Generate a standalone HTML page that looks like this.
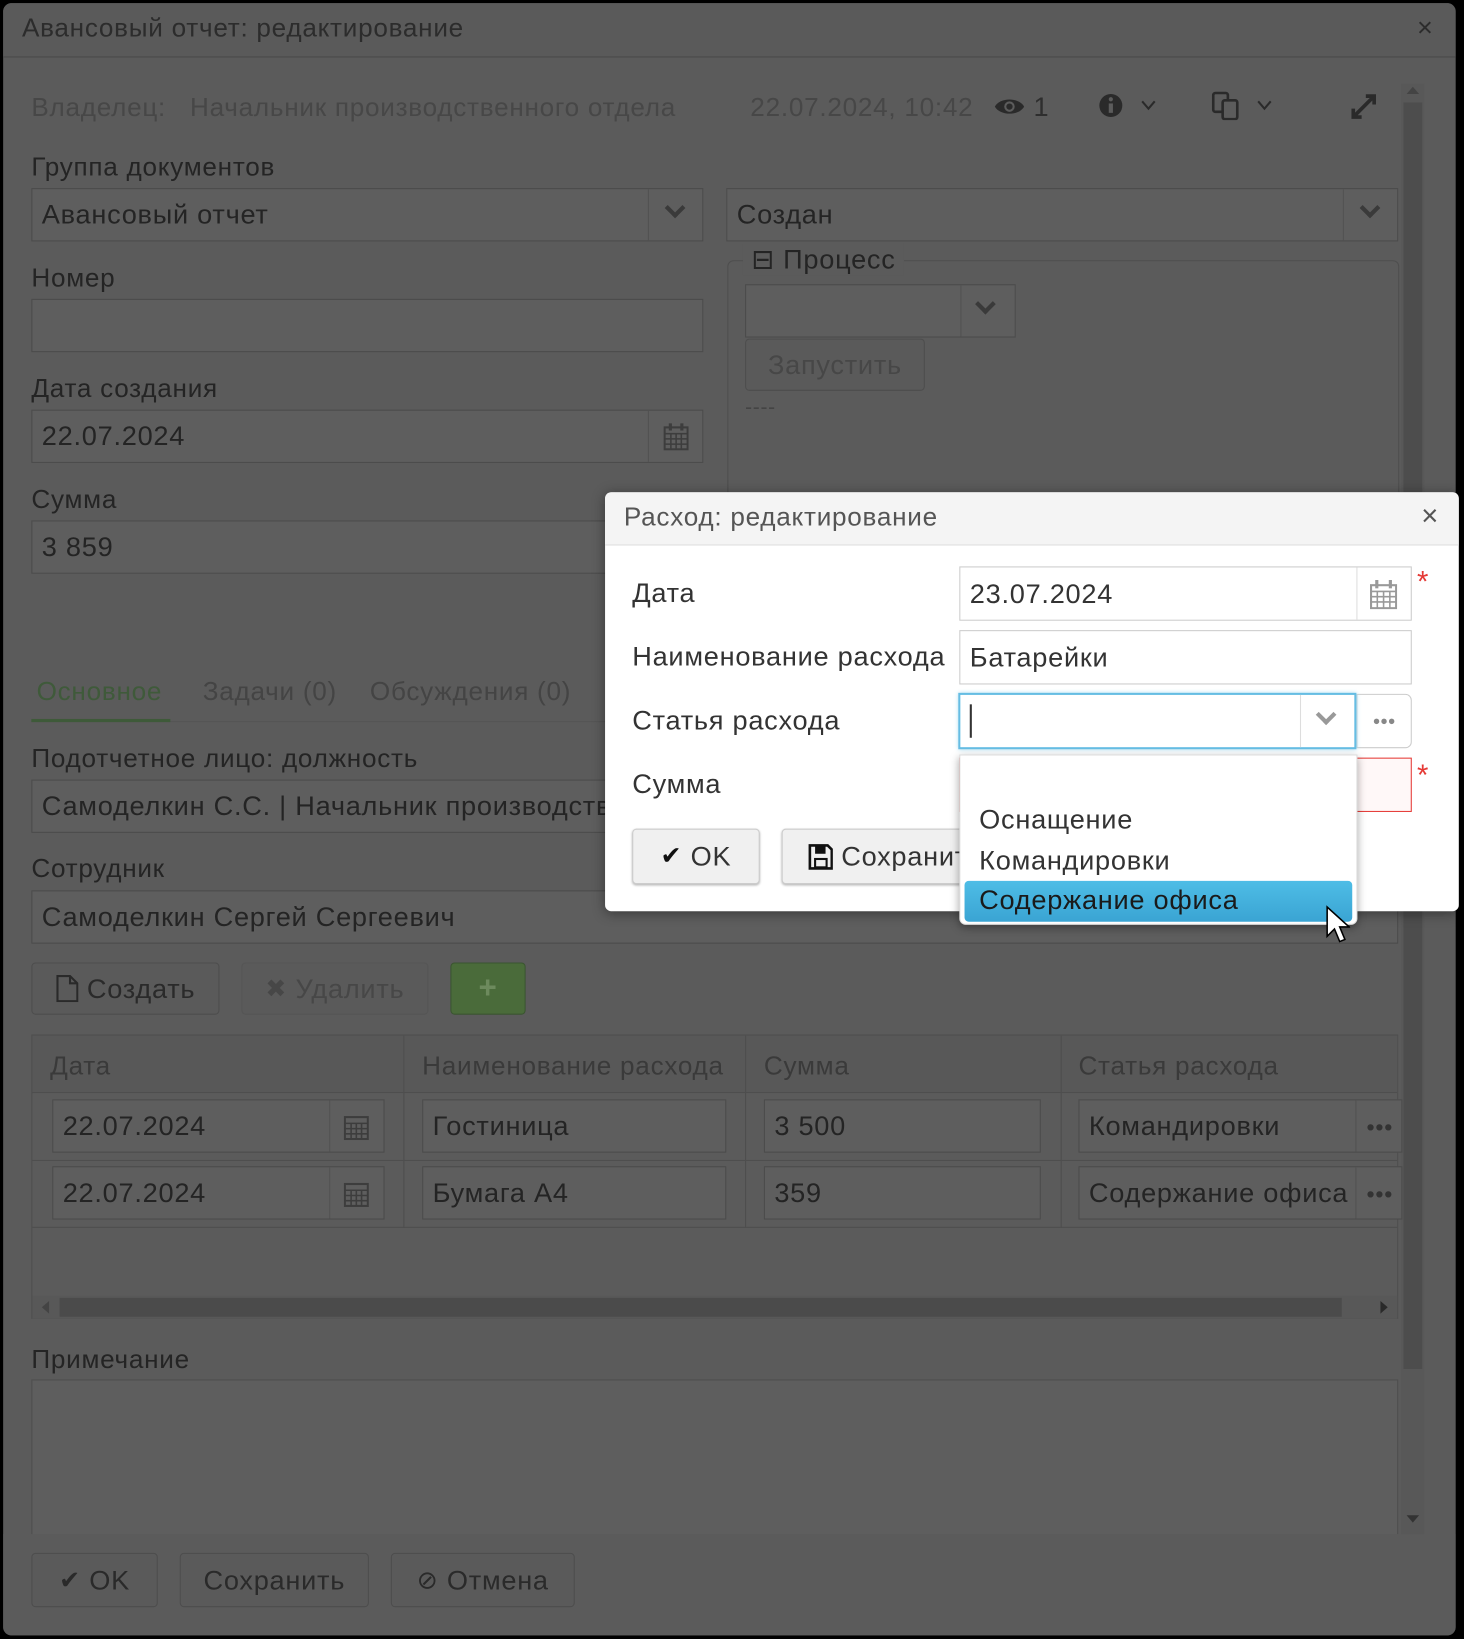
<!DOCTYPE html>
<html><head><meta charset="utf-8"><style>
*{box-sizing:border-box;margin:0;padding:0}
html,body{width:1464px;height:1638px;background:#000;overflow:hidden}
#w{position:absolute;left:0;top:0;width:1401px;height:1568px;transform:scale(1.045);transform-origin:0 0;font-family:"Liberation Sans","DejaVu Sans",sans-serif;letter-spacing:0.7px}
.a{position:absolute;white-space:nowrap}
.p{position:absolute;left:3px;top:3px;width:1390px;height:1562px;background:#5b5b5b;border-radius:8px;overflow:hidden}
.lbl{position:absolute;font-size:25px;color:#242424;white-space:nowrap}
.in{position:absolute;border:1px solid #4b4b4b;background:#5e5e5e;font-size:26px;color:#242424;padding-left:9px;display:flex;align-items:center;white-space:nowrap;overflow:hidden}
.dv{position:absolute;top:0;bottom:0;border-left:1px solid #525252}
.btn{position:absolute;border:1px solid #4d4d4d;border-radius:4px;background:#5a5a5a;font-size:26px;color:#2a2a2a;display:flex;align-items:center;justify-content:center;gap:8px}
.chev{position:absolute;width:14px;height:14px;border-right:4px solid #3a3a3a;border-bottom:4px solid #3a3a3a;transform:rotate(45deg)}
.d{font-size:26px;color:#333}
.din{position:absolute;border:1px solid #ccc;background:#fff;font-size:26px;color:#333;padding-left:9px;display:flex;align-items:center;white-space:nowrap}
.dots{position:absolute;left:264px;top:0;bottom:0;width:46px;display:flex;align-items:center;justify-content:center;font-size:14px;color:#333;font-weight:bold;letter-spacing:0}
</style></head><body><div id="w">
<div class="p">
 <div class="a" style="left:0;top:0;width:1390px;height:52px;background:#5a5a5a;border-bottom:1px solid #4a4a4a"></div>
 <div class="a" style="left:18px;top:10px;font-size:25px;color:#2c2c2c">Авансовый отчет: редактирование</div>
 <div class="a" style="left:1353px;top:8px;font-size:26px;color:#2c2c2c">×</div>
 <div class="a" style="left:1338px;top:77px;width:22px;height:1388px;background:#585858"></div>
 <div class="a" style="left:1340px;top:95px;width:18px;height:1212px;background:#4d4d4d"></div>
 <div class="a" style="left:1343px;top:80px;border:6px solid transparent;border-bottom:7px solid #444;border-top:0"></div>
 <div class="a" style="left:1343px;top:1447px;border:6px solid transparent;border-top:7px solid #333;border-bottom:0"></div>
 <div class="a" style="left:27px;top:86px;font-size:25px;color:#474747">Владелец:&nbsp;&nbsp;&nbsp;Начальник производственного отдела</div>
 <div class="a" style="left:715px;top:86px;font-size:25px;color:#474747">22.07.2024, 10:42</div>
 <svg class="a" style="left:948px;top:88px" width="30" height="22" viewBox="0 0 30 22"><path d="M1 11C6 2 24 2 29 11C24 20 6 20 1 11Z" fill="#2a2a2a"/><circle cx="15" cy="11" r="5" fill="#5c5c5c"/><circle cx="15" cy="11" r="3" fill="#2a2a2a"/></svg>
 <div class="a" style="left:986px;top:84px;font-size:26px;color:#2e2e2e">1</div>
 <svg class="a" style="left:1048px;top:86px" width="24" height="24"><circle cx="12" cy="12" r="11" fill="#2a2a2a"/><rect x="10" y="10" width="4" height="9" fill="#5c5c5c"/><circle cx="12" cy="6" r="2" fill="#5c5c5c"/></svg>
 <svg class="a" style="left:1089px;top:93px" width="14" height="10"><path d="M1 1L7 8L13 1" stroke="#2a2a2a" stroke-width="2" fill="none"/></svg>
 <svg class="a" style="left:1156px;top:84px" width="28" height="28"><rect x="2" y="2" width="14" height="18" rx="2" fill="none" stroke="#2a2a2a" stroke-width="2.5"/><rect x="11" y="9" width="14" height="18" rx="2" fill="#5c5c5c" stroke="#2a2a2a" stroke-width="2.5"/></svg>
 <svg class="a" style="left:1200px;top:93px" width="14" height="10"><path d="M1 1L7 8L13 1" stroke="#2a2a2a" stroke-width="2" fill="none"/></svg>
 <svg class="a" style="left:1288px;top:85px" width="28" height="28"><path d="M4 24L24 4M16 4H24V12M4 16V24H12" stroke="#2a2a2a" stroke-width="3.5" fill="none"/></svg>
 <div class="lbl" style="left:27px;top:143px">Группа документов</div>
 <div class="in" style="left:27px;top:177px;width:643px;height:51px">Авансовый отчет<div class="dv" style="left:589px"></div><div class="chev" style="left:608px;top:11px"></div></div>
 <div class="lbl" style="left:27px;top:249px">Номер</div>
 <div class="in" style="left:27px;top:283px;width:643px;height:51px"></div>
 <div class="lbl" style="left:27px;top:355px">Дата создания</div>
 <div class="in" style="left:27px;top:389px;width:643px;height:51px">22.07.2024<div class="dv" style="left:589px"></div>
  <svg class="a" style="left:604px;top:12px" width="24" height="26"><rect x="1" y="4" width="22" height="21" fill="none" stroke="#3d3d3d" stroke-width="2"/><path d="M1 10H23M7 10V25M12 10V25M17 10V25M1 15H23M1 20H23" stroke="#3d3d3d" stroke-width="1.5"/><rect x="5" y="0" width="3" height="7" fill="#3d3d3d"/><rect x="16" y="0" width="3" height="7" fill="#3d3d3d"/></svg></div>
 <div class="lbl" style="left:27px;top:461px">Сумма</div>
 <div class="in" style="left:27px;top:495px;width:643px;height:51px">3 859</div>
 <div class="in" style="left:692px;top:177px;width:643px;height:51px">Создан<div class="dv" style="left:589px"></div><div class="chev" style="left:608px;top:11px"></div></div>
 <div class="a" style="left:693px;top:246px;width:643px;height:400px;border:1px solid #4e4e4e;border-radius:6px"></div>
 <div class="a" style="left:708px;top:230px;background:#5b5b5b;padding:0 8px;font-size:26px;color:#242424">⊟ Процесс</div>
 <div class="in" style="left:710px;top:269px;width:259px;height:51px"><div class="dv" style="left:205px"></div><div class="chev" style="left:222px;top:11px"></div></div>
 <div class="btn" style="left:710px;top:321px;width:172px;height:50px;color:#474747">Запустить</div>
 <div class="a" style="left:710px;top:376px;font-size:20px;color:#444">----</div>
 <div class="a" style="left:27px;top:687px;width:1308px;border-top:1px solid #555"></div>
 <div class="a" style="left:32px;top:645px;font-size:25px;color:#3f5a3a">Основное</div>
 <div class="a" style="left:27px;top:685px;width:133px;height:3px;background:#3e5a39"></div>
 <div class="a" style="left:191px;top:645px;font-size:25px;color:#444">Задачи (0)</div>
 <div class="a" style="left:351px;top:645px;font-size:25px;color:#444">Обсуждения (0)</div>
 <div class="lbl" style="left:27px;top:709px">Подотчетное лицо: должность</div>
 <div class="in" style="left:27px;top:743px;width:1308px;height:51px">Самоделкин С.С. | Начальник производственного отдела</div>
 <div class="lbl" style="left:27px;top:814px">Сотрудник</div>
 <div class="in" style="left:27px;top:849px;width:1308px;height:51px">Самоделкин Сергей Сергеевич</div>
 <div class="btn" style="left:27px;top:918px;width:180px;height:50px"><svg width="22" height="26"><path d="M2 1H14L21 8V25H2Z" fill="none" stroke="#2a2a2a" stroke-width="2"/><path d="M14 1V8H21" fill="none" stroke="#2a2a2a" stroke-width="2"/></svg>Создать</div>
 <div class="btn" style="left:228px;top:918px;width:179px;height:50px;color:#474747;border-color:#555"><span style="font-size:24px">✖</span>Удалить</div>
 <div class="btn" style="left:428px;top:918px;width:72px;height:50px;background:#4a6b3a;border-color:#3a5530;color:#6d8a5d;font-size:30px;font-weight:bold">+</div>
 <div class="a" style="left:27px;top:987px;width:1308px;height:272px;border:1px solid #4e4e4e;background:#5b5b5b"></div>
 <div class="a" style="left:28px;top:988px;width:1306px;height:55px;background:#585858;border-bottom:1px solid #4e4e4e"></div>
 <div class="a" style="left:383px;top:988px;height:184px;border-left:1px solid #4e4e4e"></div>
 <div class="a" style="left:710px;top:988px;height:184px;border-left:1px solid #4e4e4e"></div>
 <div class="a" style="left:1012px;top:988px;height:184px;border-left:1px solid #4e4e4e"></div>
 <div class="a" style="left:45px;top:1003px;font-size:25px;color:#3a3a3a">Дата</div>
 <div class="a" style="left:401px;top:1003px;font-size:25px;color:#3a3a3a">Наименование расхода</div>
 <div class="a" style="left:728px;top:1003px;font-size:25px;color:#3a3a3a">Сумма</div>
 <div class="a" style="left:1029px;top:1003px;font-size:25px;color:#3a3a3a">Статья расхода</div>
 <div class="a" style="left:28px;top:1107px;width:1306px;border-top:1px solid #4e4e4e"></div>
 <div class="a" style="left:28px;top:1171px;width:1306px;border-top:1px solid #4e4e4e"></div>
 <div class="in" style="left:47px;top:1049px;width:318px;height:51px">22.07.2024<div class="dv" style="left:264px"></div><svg class="a" style="left:278px;top:12px" width="24" height="26"><rect x="1" y="4" width="22" height="21" fill="none" stroke="#3d3d3d" stroke-width="2"/><path d="M1 10H23M7 10V25M12 10V25M17 10V25M1 15H23M1 20H23" stroke="#3d3d3d" stroke-width="1.5"/></svg></div>
 <div class="in" style="left:401px;top:1049px;width:291px;height:51px">Гостиница</div>
 <div class="in" style="left:728px;top:1049px;width:265px;height:51px">3 500</div>
 <div class="in" style="left:1029px;top:1049px;width:310px;height:51px">Командировки<div class="dv" style="left:264px"></div><div class="dots">●●●</div></div>
 <div class="in" style="left:47px;top:1113px;width:318px;height:51px">22.07.2024<div class="dv" style="left:264px"></div><svg class="a" style="left:278px;top:12px" width="24" height="26"><rect x="1" y="4" width="22" height="21" fill="none" stroke="#3d3d3d" stroke-width="2"/><path d="M1 10H23M7 10V25M12 10V25M17 10V25M1 15H23M1 20H23" stroke="#3d3d3d" stroke-width="1.5"/></svg></div>
 <div class="in" style="left:401px;top:1113px;width:291px;height:51px">Бумага А4</div>
 <div class="in" style="left:728px;top:1113px;width:265px;height:51px">359</div>
 <div class="in" style="left:1029px;top:1113px;width:310px;height:51px">Содержание офиса<div class="dv" style="left:264px"></div><div class="dots">●●●</div></div>
 <div class="a" style="left:28px;top:1237px;width:1306px;height:22px;background:#585858"></div>
 <div class="a" style="left:54px;top:1239px;width:1227px;height:18px;background:#4b4b4b"></div>
 <div class="a" style="left:37px;top:1242px;border:6px solid transparent;border-right:7px solid #444;border-left:0"></div>
 <div class="a" style="left:1318px;top:1242px;border:6px solid transparent;border-left:7px solid #2a2a2a;border-right:0"></div>
 <div class="lbl" style="left:27px;top:1284px">Примечание</div>
 <div class="a" style="left:27px;top:1317px;width:1308px;height:160px;border:1px solid #4e4e4e;background:#5e5e5e"></div>
 <div class="a" style="left:0;top:1465px;width:1390px;height:100px;background:#5b5b5b"></div>
 <div class="btn" style="left:27px;top:1483px;width:121px;height:52px"><span style="font-size:24px">✔</span>OK</div>
 <div class="btn" style="left:169px;top:1483px;width:181px;height:52px">Сохранить</div>
 <div class="btn" style="left:371px;top:1483px;width:176px;height:52px"><span style="font-size:24px">⊘</span>Отмена</div>
</div>
<div class="a" style="left:579px;top:471px;width:817px;height:401px;background:#fff;border-radius:6px;overflow:hidden;box-shadow:0 2px 12px rgba(0,0,0,.4)">
 <div class="a" style="left:0;top:0;width:817px;height:51px;background:#f4f4f4;border-bottom:1px solid #ddd"></div>
 <div class="a" style="left:18px;top:10px;font-size:25px;color:#555">Расход: редактирование</div>
 <div class="a" style="left:781px;top:7px;font-size:28px;color:#555">×</div>
 <div class="a d" style="left:26px;top:81px">Дата</div>
 <div class="a d" style="left:26px;top:142px">Наименование расхода</div>
 <div class="a d" style="left:26px;top:203px">Статья расхода</div>
 <div class="a d" style="left:26px;top:264px">Сумма</div>
 <div class="din" style="left:339px;top:71px;width:433px;height:52px">23.07.2024<div class="dv" style="left:379px;border-color:#ddd"></div><svg class="a" style="left:392px;top:12px" width="26" height="28"><rect x="1" y="5" width="24" height="22" fill="none" stroke="#999" stroke-width="2"/><path d="M1 11H25M7 11V27M13 11V27M19 11V27M1 16H25M1 21H25" stroke="#999" stroke-width="1.5"/><rect x="5" y="0" width="3" height="8" fill="#999"/><rect x="18" y="0" width="3" height="8" fill="#999"/></svg></div>
 <div class="a" style="left:777px;top:70px;font-size:28px;color:#e53935">*</div>
 <div class="din" style="left:339px;top:132px;width:433px;height:52px">Батарейки</div>
 <div class="din" style="left:719px;top:193px;width:53px;height:52px;border-radius:0 6px 6px 0;justify-content:center;padding:0;font-size:12px;color:#888;font-weight:bold;letter-spacing:0">●●●</div>
 <div class="din" style="left:338px;top:192px;width:381px;height:54px;border:2px solid #66bde3;box-shadow:0 0 4px #a9dcf0"><div style="width:2px;height:32px;background:#333"></div><div class="dv" style="left:325px;border-color:#ddd"></div><div class="chev" style="left:343px;top:12px;border-color:#999"></div></div>
 <div class="din" style="left:339px;top:254px;width:433px;height:52px;border-color:#e53935;background:#fff8f8"></div>
 <div class="a" style="left:777px;top:255px;font-size:28px;color:#e53935">*</div>
 <div class="btn" style="left:26px;top:322px;width:122px;height:53px;background:#f0f0f0;border-color:#ccc;color:#333;box-shadow:0 1px 2px #bbb"><span style="font-size:24px;color:#111">✔</span>OK</div>
 <div class="btn" style="left:169px;top:322px;width:200px;height:53px;background:#f0f0f0;border-color:#ccc;color:#333;justify-content:flex-start;padding-left:24px;box-shadow:0 1px 2px #bbb"><svg width="24" height="26"><path d="M2 2H19L23 6V24H2Z" fill="none" stroke="#111" stroke-width="2.5"/><rect x="7" y="3" width="10" height="7" fill="#111"/><rect x="7" y="15" width="11" height="8" fill="none" stroke="#111" stroke-width="2"/></svg>Сохранить</div>
</div>
<div class="a" style="left:918px;top:722px;width:381px;height:163px;background:#fff;border:1px solid #ddd;border-radius:0 0 6px 6px;box-shadow:0 3px 8px rgba(0,0,0,.35)">
 <div class="a d" style="left:18px;top:46px">Оснащение</div>
 <div class="a d" style="left:18px;top:85px">Командировки</div>
 <div class="a" style="left:4px;top:120px;width:371px;height:39px;border-radius:4px;background:linear-gradient(#4ebde6,#3aa4d3)"></div>
 <div class="a d" style="left:18px;top:123px;color:#1a1a1a">Содержание офиса</div>
</div>
<svg class="a" style="left:1268px;top:866px" width="24" height="38"><path d="M2 2V30L9 23L14 35L19 33L14 21H23Z" fill="#fff" stroke="#000" stroke-width="1.5"/></svg>
</div></body></html>
